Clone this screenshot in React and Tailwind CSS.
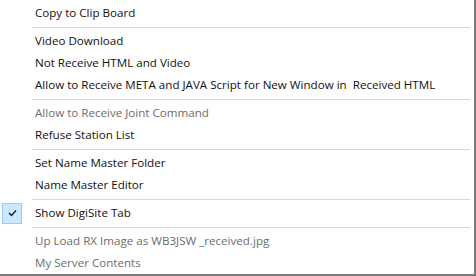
import React from 'react';

const items = [
  { label: 'Copy to Clip Board' },
  { sep: true },
  { label: 'Video Download' },
  { label: 'Not Receive HTML and Video' },
  { label: 'Allow to Receive META and JAVA Script for New Window in\u00a0 Received HTML' },
  { sep: true },
  { label: 'Allow to Receive Joint Command', disabled: true },
  { label: 'Refuse Station List' },
  { sep: true },
  { label: 'Set Name Master Folder' },
  { label: 'Name Master Editor' },
  { sep: true },
  { label: 'Show DigiSite Tab', checked: true },
  { sep: true },
  { label: 'Up Load RX Image as WB3JSW _received.jpg', disabled: true },
  { label: 'My Server Contents', disabled: true },
];

const CheckBox = () => (
  <div className="w-[20px] h-[21px] bg-[#cce8ff] border border-[#99ccf0] flex items-center justify-center">
    <svg width="9" height="8" viewBox="0 0 9 8">
      <path d="M1 4 L3.5 6.5 L8 1.5" fill="none" stroke="#1a1a1a" strokeWidth="1.4" />
    </svg>
  </div>
);

export default function App() {
  return (
    <div
      className="w-[476px] h-[276px] bg-white border-r-2 border-b-2 border-[#7a7a7a] overflow-hidden text-[11.6px]"
      style={{ fontFamily: '"Open Sans", "Noto Sans", sans-serif' }}
    >
      <div className="pt-[2px] flex flex-col">
        {items.map((item, i) =>
          item.sep ? (
            <div key={i} className="h-[6px] flex items-center pl-[32px] pr-[4px]">
              <div className="h-px w-full bg-[#d7d7d7]" />
            </div>
          ) : (
            <div key={i} className="h-[22px] flex items-center">
              <div className="w-[35px] pl-[2px] flex items-center">
                {item.checked && <CheckBox />}
              </div>
              <span className={item.disabled ? 'text-[#6d6d6d]' : 'text-[#111]'}>
                {item.label}
              </span>
            </div>
          )
        )}
      </div>
    </div>
  );
}
